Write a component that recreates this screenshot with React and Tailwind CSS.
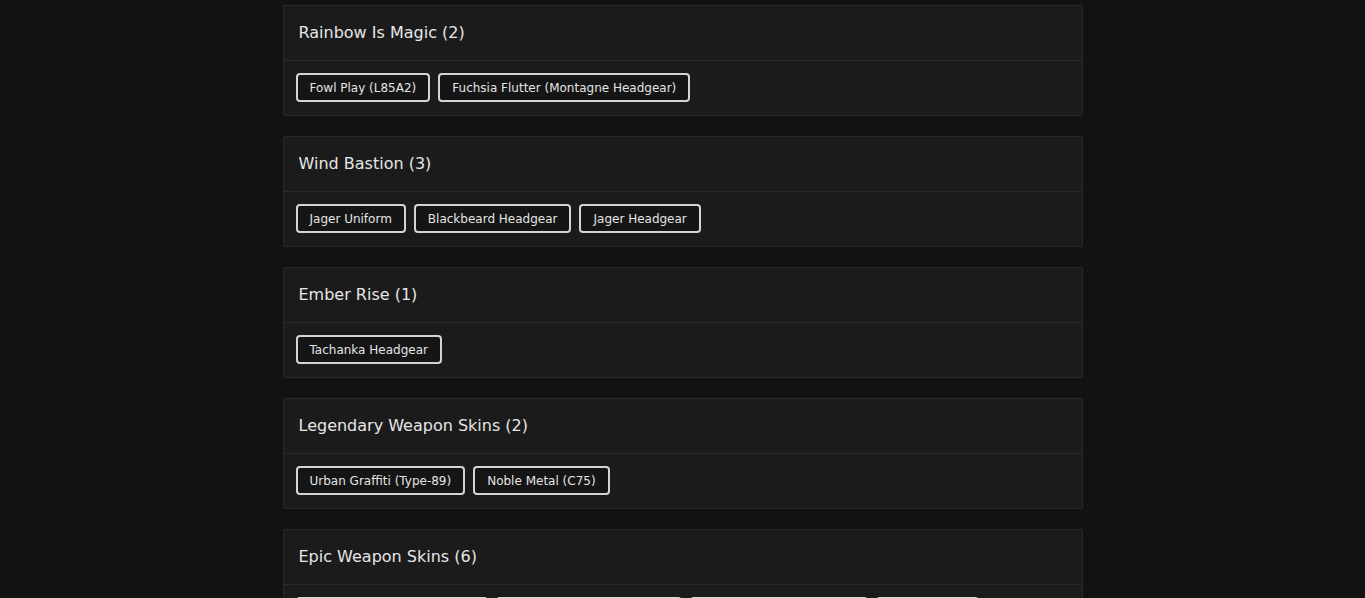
import React from "react";

const groups = [
  { title: "Rainbow Is Magic (2)", items: ["Fowl Play (L85A2)", "Fuchsia Flutter (Montagne Headgear)"] },
  { title: "Wind Bastion (3)", items: ["Jager Uniform", "Blackbeard Headgear", "Jager Headgear"] },
  { title: "Ember Rise (1)", items: ["Tachanka Headgear"] },
  { title: "Legendary Weapon Skins (2)", items: ["Urban Graffiti (Type-89)", "Noble Metal (C75)"] },
  { title: "Epic Weapon Skins (6)", items: ["Crimson Circuit (Mk1 9mm)", "Arctic Breeze (Spear .308)", "Jade Dragon (Mk17 CQB)", "Cobalt (416)", "Heatwave (R4-C)", "Red Lotus (F2)"] },
];

export default function App() {
  return (
    <div
      className="w-[1365px] h-[598px] overflow-hidden bg-[#121212] text-[#e8e8e8]"
      style={{ fontFamily: '"DejaVu Sans", sans-serif' }}
    >
      <div className="w-[800px] mx-auto pt-[5px] flex flex-col gap-5">
        {groups.map((g) => (
          <div key={g.title} className="border border-[#2a2a2a] bg-[#1b1b1b] rounded-[2px]">
            <div className="h-[55px] flex items-center px-[15px] border-b border-[#2a2a2a]">
              <h2 className="text-[16px] font-medium text-[#e6e6e6]">{g.title}</h2>
            </div>
            <div className="px-3 pt-[12px] pb-[13px] flex flex-wrap gap-2">
              {g.items.map((it) => (
                <span
                  key={it}
                  className="h-[29px] px-3 flex items-center border-2 border-[#d4d4d4] rounded-[4px] bg-[#151515] text-[12px] text-[#e4e4e4]"
                >
                  {it}
                </span>
              ))}
            </div>
          </div>
        ))}
      </div>
    </div>
  );
}
